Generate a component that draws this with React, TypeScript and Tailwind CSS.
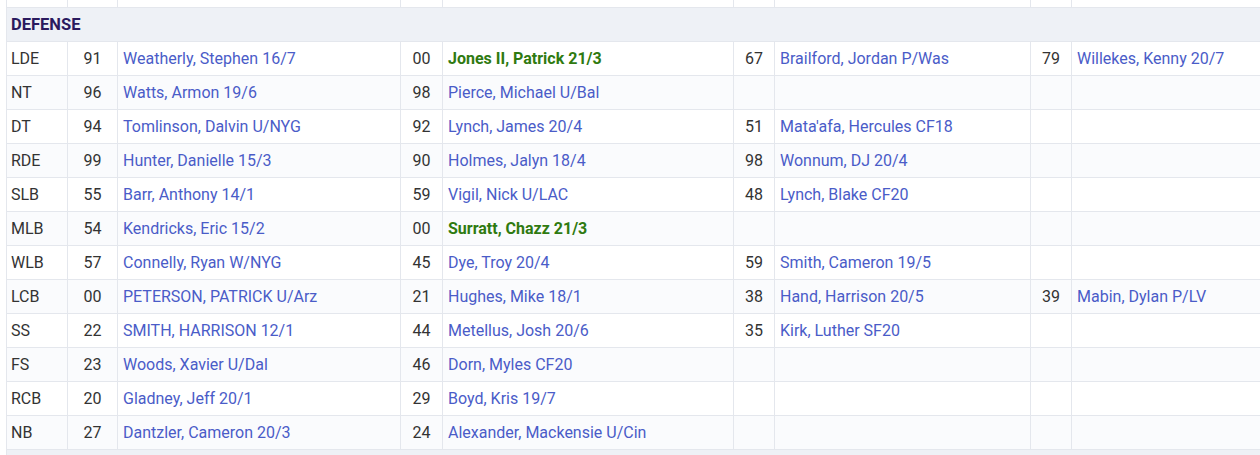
import React from "react";

type Cell = { num: string; name: string; hot?: boolean } | null;

const ROWS: { pos: string; cells: Cell[] }[] = [
  { pos: "LDE", cells: [{ num: "91", name: "Weatherly, Stephen 16/7" }, { num: "00", name: "Jones II, Patrick 21/3", hot: true }, { num: "67", name: "Brailford, Jordan P/Was" }, { num: "79", name: "Willekes, Kenny 20/7" }] },
  { pos: "NT", cells: [{ num: "96", name: "Watts, Armon 19/6" }, { num: "98", name: "Pierce, Michael U/Bal" }, null, null] },
  { pos: "DT", cells: [{ num: "94", name: "Tomlinson, Dalvin U/NYG" }, { num: "92", name: "Lynch, James 20/4" }, { num: "51", name: "Mata'afa, Hercules CF18" }, null] },
  { pos: "RDE", cells: [{ num: "99", name: "Hunter, Danielle 15/3" }, { num: "90", name: "Holmes, Jalyn 18/4" }, { num: "98", name: "Wonnum, DJ 20/4" }, null] },
  { pos: "SLB", cells: [{ num: "55", name: "Barr, Anthony 14/1" }, { num: "59", name: "Vigil, Nick U/LAC" }, { num: "48", name: "Lynch, Blake CF20" }, null] },
  { pos: "MLB", cells: [{ num: "54", name: "Kendricks, Eric 15/2" }, { num: "00", name: "Surratt, Chazz 21/3", hot: true }, null, null] },
  { pos: "WLB", cells: [{ num: "57", name: "Connelly, Ryan W/NYG" }, { num: "45", name: "Dye, Troy 20/4" }, { num: "59", name: "Smith, Cameron 19/5" }, null] },
  { pos: "LCB", cells: [{ num: "00", name: "PETERSON, PATRICK U/Arz" }, { num: "21", name: "Hughes, Mike 18/1" }, { num: "38", name: "Hand, Harrison 20/5" }, { num: "39", name: "Mabin, Dylan P/LV" }] },
  { pos: "SS", cells: [{ num: "22", name: "SMITH, HARRISON 12/1" }, { num: "44", name: "Metellus, Josh 20/6" }, { num: "35", name: "Kirk, Luther SF20" }, null] },
  { pos: "FS", cells: [{ num: "23", name: "Woods, Xavier U/Dal" }, { num: "46", name: "Dorn, Myles CF20" }, null, null] },
  { pos: "RCB", cells: [{ num: "20", name: "Gladney, Jeff 20/1" }, { num: "29", name: "Boyd, Kris 19/7" }, null, null] },
  { pos: "NB", cells: [{ num: "27", name: "Dantzler, Cameron 20/3" }, { num: "24", name: "Alexander, Mackensie U/Cin" }, null, null] },
];

const td = "border-b border-r border-[#e4e7ed] h-[34px] pt-[2px] pb-0 align-middle";

export default function App() {
  return (
    <div className="w-[1260px] h-[455px] overflow-hidden bg-white text-[16px] text-[#333]" style={{ fontFamily: "Roboto, 'Liberation Sans', sans-serif" }}>
      <table className="border-collapse table-fixed w-[1290px] ml-[6px] border-l border-[#e4e7ed]">
        <colgroup>
          <col className="w-[61px]" />
          <col className="w-[50px]" />
          <col className="w-[283px]" />
          <col className="w-[42px]" />
          <col className="w-[291px]" />
          <col className="w-[41px]" />
          <col className="w-[256px]" />
          <col className="w-[41px]" />
          <col className="w-[225px]" />
        </colgroup>
        <tbody>
          <tr>
            {Array.from({ length: 9 }).map((_, i) => (
              <td key={i} className="border-b border-r border-[#e4e7ed] h-[7px] p-0" />
            ))}
          </tr>
          <tr className="bg-[#eef1f6]">
            <td colSpan={9} className="border-b border-[#e4e7ed] h-[34px] pl-[4px] pt-[2px] font-bold text-[16.5px] text-[#2a1a5e]">DEFENSE</td>
          </tr>
          {ROWS.map((r, i) => (
            <tr key={r.pos} className={i % 2 === 1 ? "bg-[#fafbfd]" : "bg-white"}>
              <td className={`${td} pl-[4px]`}>{r.pos}</td>
              {r.cells.map((c, j) => (
                <React.Fragment key={j}>
                  <td className={`${td} text-center`}>{c?.num}</td>
                  <td className={`${td} pl-[5px] whitespace-nowrap`}>
                    {c && (
                      <span className={c.hot ? "font-bold text-[#2f7a10]" : "text-[#4a5cc8]"}>{c.name}</span>
                    )}
                  </td>
                </React.Fragment>
              ))}
            </tr>
          ))}
          <tr className="bg-[#eef1f6]">
            <td colSpan={9} className="h-[34px]" />
          </tr>
        </tbody>
      </table>
    </div>
  );
}
